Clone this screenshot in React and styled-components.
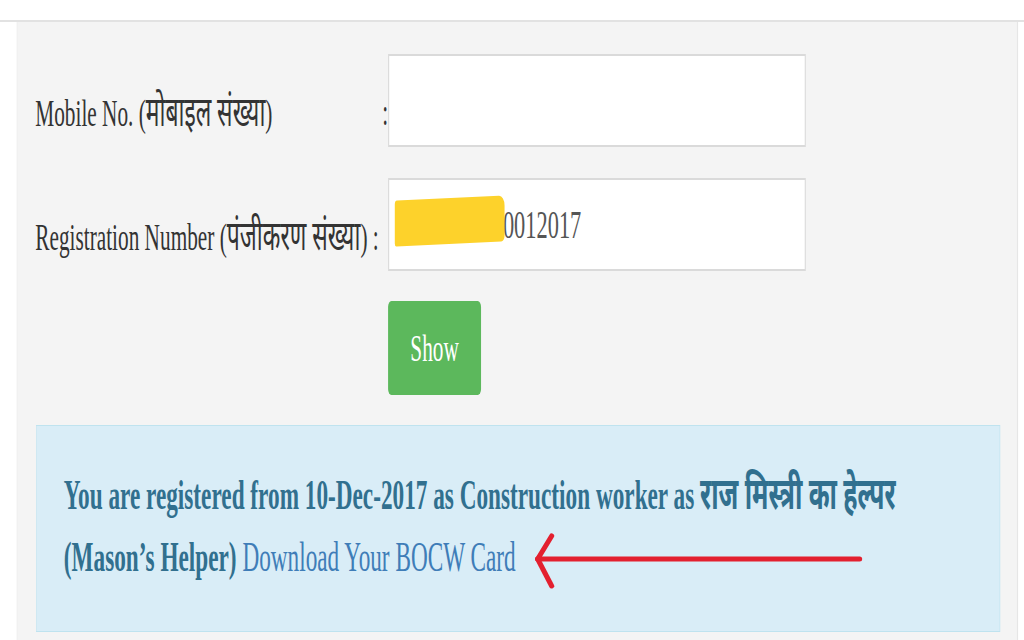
import React from 'react';
import styled, { createGlobalStyle } from 'styled-components';

// the reference is a stretched screenshot: lay out wide, then squeeze horizontally
const SX = 0.56;

const Global = createGlobalStyle`
  html, body {
    margin: 0;
    padding: 0;
    background: #fff;
    overflow: hidden;
  }
`;

const Stage = styled.div`
  width: ${1024 / SX}px;
  height: 640px;
  transform: scaleX(${SX});
  transform-origin: 0 0;
  font-family: "Liberation Serif", "Noto Sans Devanagari", "Noto Serif Devanagari", serif;
  color: #333;
`;

const TopBar = styled.div`
  height: 20px;
  border-bottom: 2px solid #e2e2e2;
`;

const Well = styled.div`
  margin-left: 30px;
  width: 1788px;
  box-sizing: border-box;
  height: 640px;
  background: #f4f4f4;
  border-left: 1px solid #ececec;
  border-right: 2px solid #e6e6e6;
  padding: 32px 32px 0 32px;
`;

const Row = styled.div`
  display: flex;
  align-items: flex-start;
  margin-bottom: ${(p) => p.$gap || 31}px;
`;

const Label = styled.label`
  width: 630px;
  flex: none;
  display: flex;
  justify-content: space-between;
  padding-top: 39px;
  font-size: 38px;
  line-height: 38px;
  white-space: nowrap;
`;

const Deva = styled.span`
  font-size: 41px;
  line-height: 38px;
`;

const FieldWrap = styled.div`
  position: relative;
  width: 746px;
  height: 93px;
`;

const Input = styled.input`
  box-sizing: border-box;
  width: 100%;
  height: 100%;
  border: 2px solid #dadada;
  background: #fff;
  font-family: "Liberation Serif", serif;
  font-size: 40px;
  color: #555;
  padding: 0 0 0 ${(p) => p.$indent || 20}px;
  outline: none;
`;

const Blob = styled.span`
  position: absolute;
  left: 12px;
  top: 20px;
  width: 196px;
  height: 46px;
  background: #fdd22b;
  border-radius: 4px 10px 6px 3px;
  transform: skewY(-1.5deg);
`;

const ShowButton = styled.button`
  margin-left: 630px;
  width: 166px;
  height: 94px;
  border: none;
  border-radius: 6px;
  background: #5cb85c;
  color: #fff;
  font-family: "Liberation Serif", serif;
  font-size: 38px;
  cursor: pointer;
  margin-bottom: 30px;
  display: block;
`;

const Alert = styled.div`
  margin-left: 2px;
  width: 1721px;
  box-sizing: border-box;
  height: 207px;
  background: #d9edf7;
  border: 1px solid #bfe3ef;
  padding: 37px 48px 0 48px;
  color: #31708f;
  font-size: 41.5px;
  line-height: 62px;
  white-space: nowrap;
`;

const Strong = styled.b`
  font-weight: bold;
`;

const Hindi = styled.span`
  font-size: 45px;
  line-height: 62px;
  font-weight: bold;
`;

const Link = styled.a`
  color: #3f7db8;
  text-decoration: none;
  font-weight: normal;
`;

const Arrow = styled.svg`
  vertical-align: middle;
  margin-left: 32px;
`;

export default function App() {
  return (
    <>
      <Global />
      <Stage>
        <TopBar />
        <Well>
          <Row>
            <Label>
              <span>Mobile No. (<Deva>मोबाइल संख्या</Deva>)</span>
              <span>:</span>
            </Label>
            <FieldWrap>
              <Input type="text" defaultValue="" />
            </FieldWrap>
          </Row>
          <Row $gap={30}>
            <Label>
              <span>Registration Number (<Deva>पंजीकरण संख्या</Deva>) :</span>
            </Label>
            <FieldWrap>
              <Blob />
              <Input type="text" defaultValue="0012017" $indent={203} />
            </FieldWrap>
          </Row>
          <ShowButton>Show</ShowButton>
          <Alert>
            <Strong>
              You are registered from 10-Dec-2017 as Construction worker as <Hindi>राज मिस्त्री का हेल्पर</Hindi>
              <br />
              (Mason’s Helper)
            </Strong>{' '}
            <Link href="#">Download Your BOCW Card</Link>
            <Arrow width={330 / SX} height="56" viewBox="0 0 330 56" preserveAspectRatio="none">
              <g stroke="#e3202f" strokeWidth="5" strokeLinecap="round" fill="none">
                <line x1="4" y1="26" x2="326" y2="26" />
                <line x1="4" y1="26" x2="18" y2="3" />
                <line x1="4" y1="26" x2="18" y2="53" />
              </g>
            </Arrow>
          </Alert>
        </Well>
      </Stage>
    </>
  );
}
